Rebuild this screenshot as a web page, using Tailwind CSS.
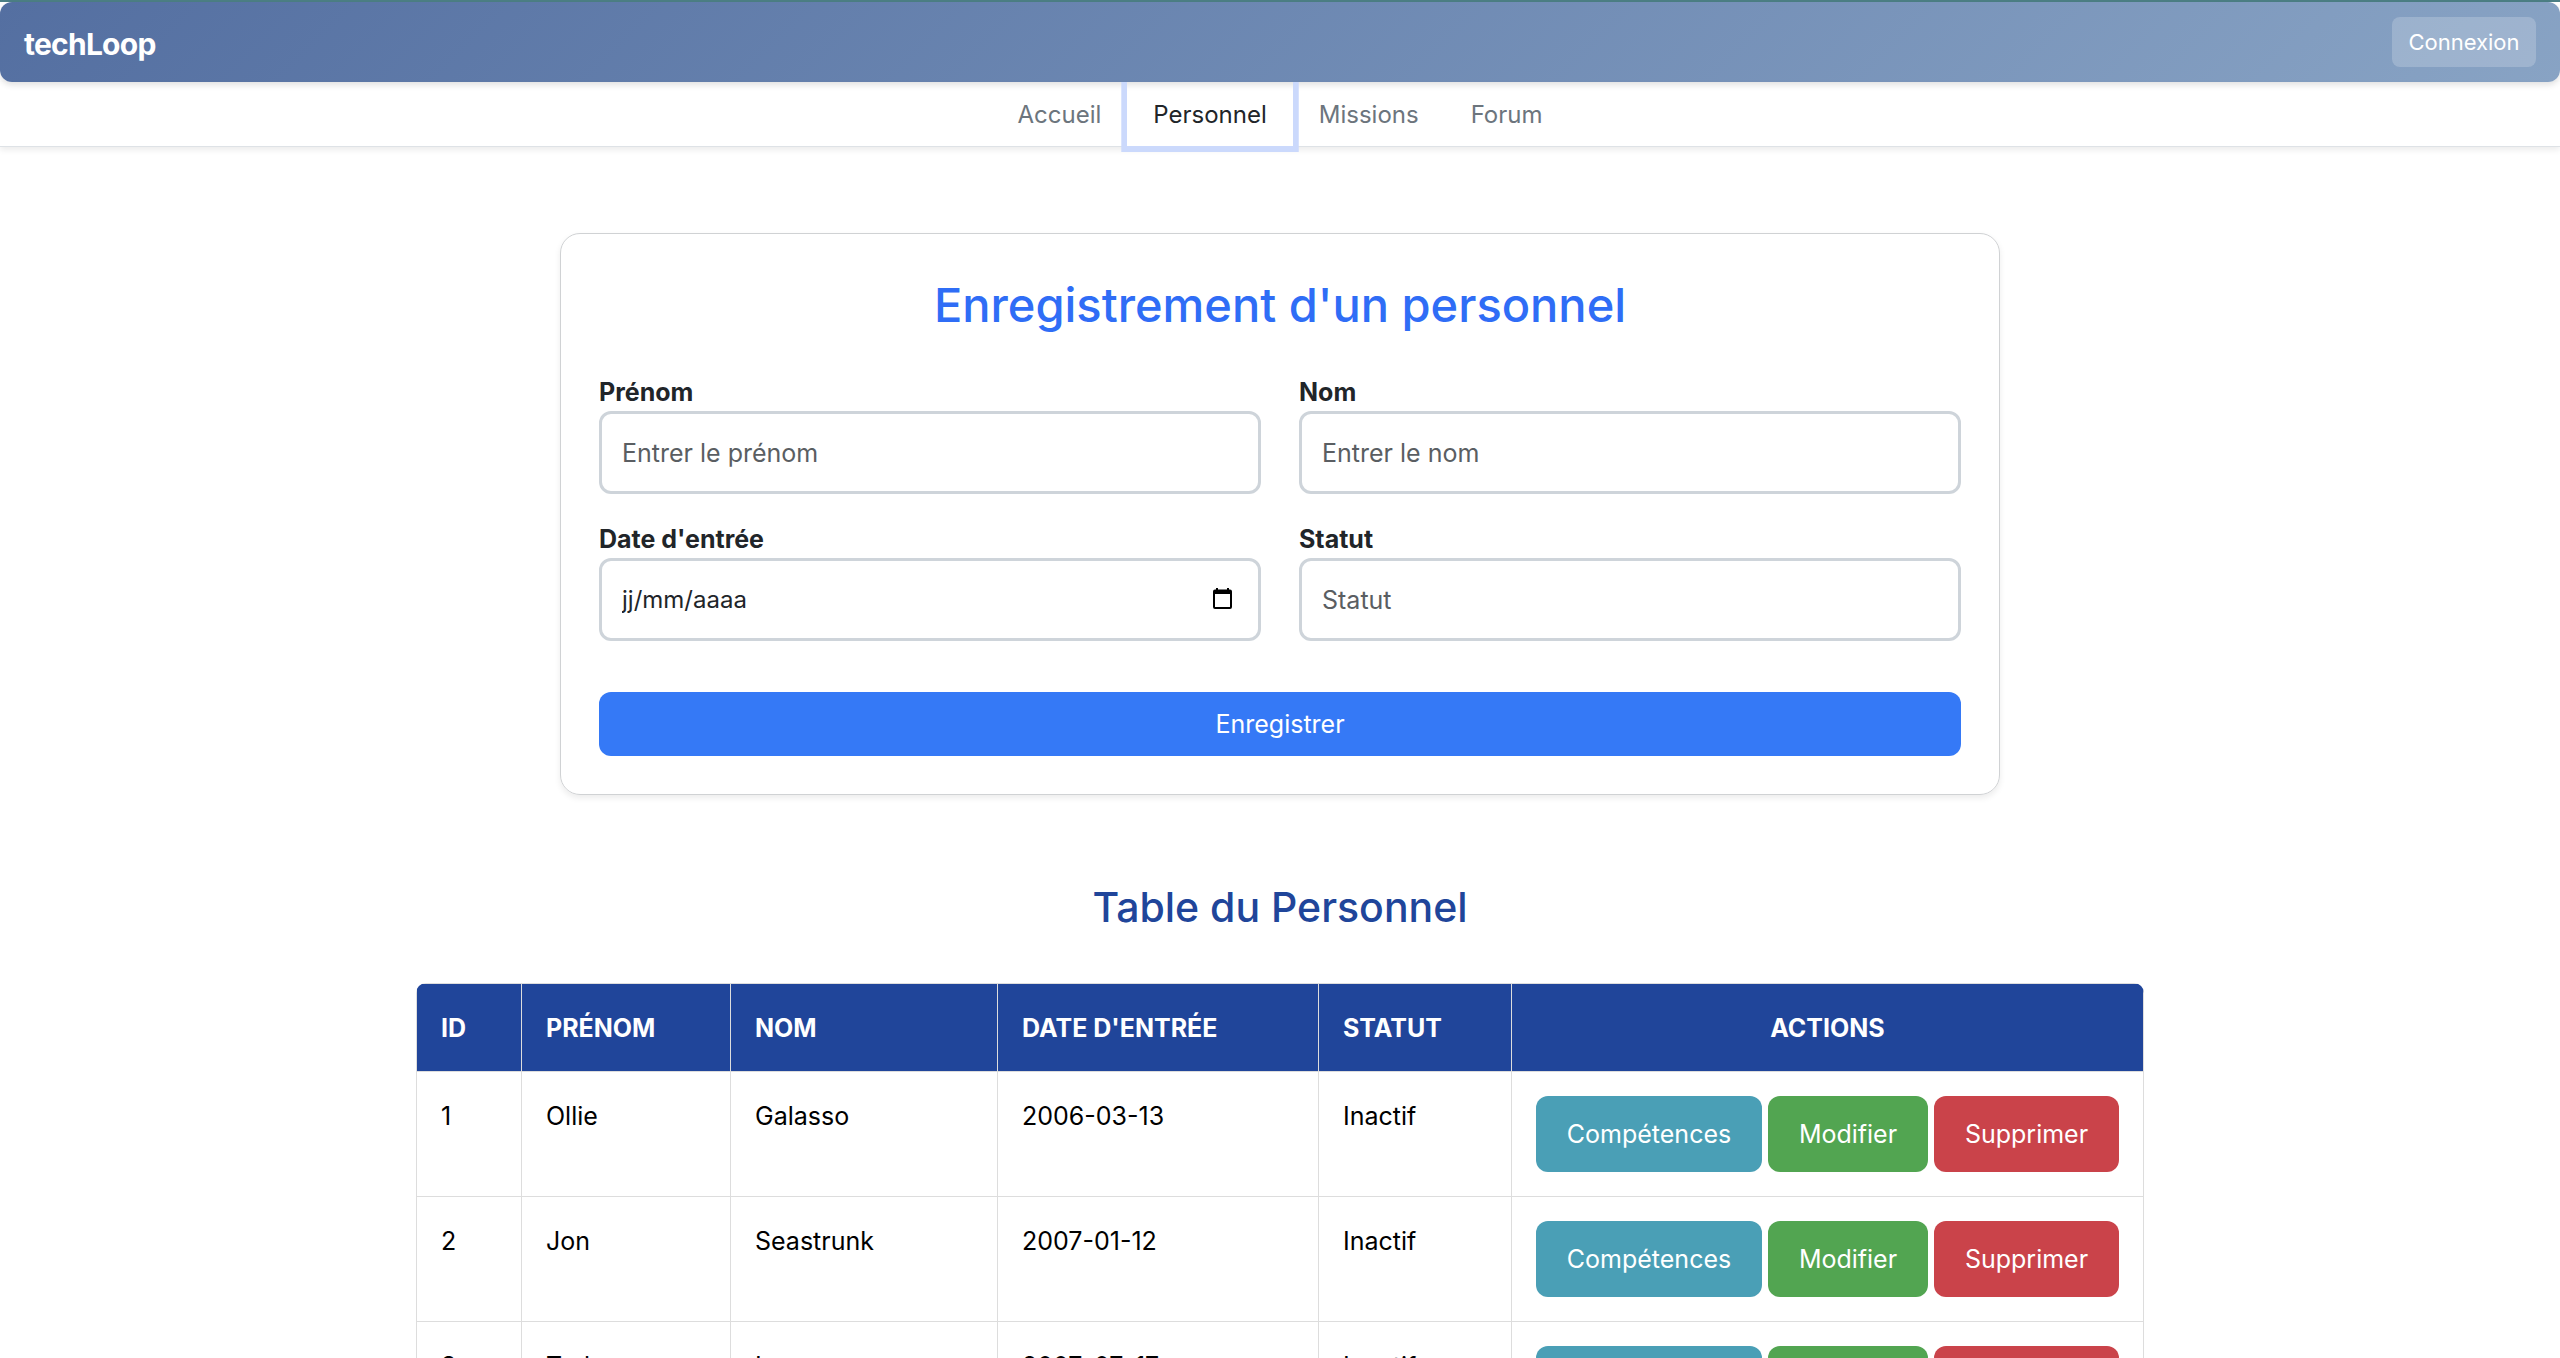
<!DOCTYPE html>
<html lang="fr">
<head>
<meta charset="utf-8">
<title>techLoop</title>
<script src="https://cdn.jsdelivr.net/npm/@tailwindcss/browser@4"></script>
</head>
<body class="bg-white font-['Inter','Liberation_Sans',sans-serif] text-[25px] leading-[38px] text-[#212529] overflow-x-hidden">
<header class="border-t-2 border-[#4c7f85]">
  <div class="flex items-center justify-between h-20 px-6 rounded-xl bg-linear-135 from-[#546fa1] to-[#88a3c4] shadow-[0_3px_6px_rgba(0,0,0,0.12)]">
    <a href="#" class="pt-1 text-[30px] font-bold text-white tracking-tight">techLoop</a>
    <button type="button" class="h-[50px] w-36 rounded-lg bg-white/20 text-[22px] leading-none text-white">Connexion</button>
  </div>
</header>
<nav class="flex justify-center h-[65px] border-b border-[#dee2e6] text-[24px] text-[#6c757d] shadow-[0_3px_6px_rgba(0,0,0,0.08)]">
  <a href="#" class="flex items-center px-[26px] pt-[2px]">Accueil</a>
  <a href="#" class="flex items-center px-[26px] pt-[2px] text-[#212529] shadow-[0_0_0_6px_#cbd9fc] [clip-path:inset(0_-6px_-6px_-6px)]">Personnel</a>
  <a href="#" class="flex items-center px-[26px] pt-[2px]">Missions</a>
  <a href="#" class="flex items-center px-[26px] pt-[2px]">Forum</a>
</nav>
<main class="px-10">
  <form class="mx-auto mt-[86px] max-w-[1440px] rounded-[20px] border border-[#d0d2d4] px-[38px] pt-10 pb-[38px] shadow-[0_3px_6px_rgba(0,0,0,0.08)]">
    <h1 class="text-center text-[47px] leading-[62px] font-medium text-[#2f6df6]">Enregistrement d'un personnel</h1>
    <div class="mt-[37px] grid grid-cols-2 gap-x-[38px] gap-y-[26px]">
      <div>
        <label for="prenom" class="block font-bold">Prénom</label>
        <input id="prenom" type="text" placeholder="Entrer le prénom" class="block h-[83px] w-full rounded-xl border-3 border-[#ced4da] px-5 placeholder:text-[#5a5e62]">
      </div>
      <div>
        <label for="nom" class="block font-bold">Nom</label>
        <input id="nom" type="text" placeholder="Entrer le nom" class="block h-[83px] w-full rounded-xl border-3 border-[#ced4da] px-5 placeholder:text-[#5a5e62]">
      </div>
      <div>
        <label for="date" class="block font-bold">Date d'entrée</label>
        <div class="flex h-[83px] items-center rounded-xl border-3 border-[#ced4da] pr-6 pl-5">
          <input id="date" type="text" placeholder="jj/mm/aaaa" class="min-w-0 flex-1 text-[24px] placeholder:text-[#212529]">
          <button type="button" aria-label="Ouvrir le calendrier">
            <svg class="block size-[23px]" viewBox="0 0 23 23"><path fill="#000" fill-rule="evenodd" d="M5 0h2v1.500h9V0h2v1.500h1a2 2 0 0 1 2 2v15.500a2 2 0 0 1-2 2H4a2 2 0 0 1-2-2V3.500a2 2 0 0 1 2-2h1zM4 6v13h15V6z"/></svg>
          </button>
        </div>
      </div>
      <div>
        <label for="statut" class="block font-bold">Statut</label>
        <input id="statut" type="text" placeholder="Statut" class="block h-[83px] w-full rounded-xl border-3 border-[#ced4da] px-5 placeholder:text-[#5a5e62]">
      </div>
    </div>
    <button type="submit" class="mt-[51px] block h-16 w-full rounded-xl bg-[#3579f6] text-white">Enregistrer</button>
  </form>
  <section class="mx-auto mt-[84px] max-w-[1728px]">
    <h2 class="text-center text-[41px] leading-[56px] font-medium text-[#20459a]">Table du Personnel</h2>
    <div class="mt-12 overflow-hidden rounded-t-[10px]">
    <table class="w-full table-fixed border-collapse text-black">
      <colgroup><col class="w-[105px]"><col class="w-[209px]"><col class="w-[267px]"><col class="w-[321px]"><col class="w-[193px]"><col></colgroup>
      <thead>
        <tr class="h-[88px] bg-[#20459a] text-left font-bold uppercase text-white">
          <th class="border border-[#dddddd] px-6">ID</th><th class="border border-[#dddddd] px-6">Prénom</th><th class="border border-[#dddddd] px-6">Nom</th><th class="border border-[#dddddd] px-6">Date d'entrée</th><th class="border border-[#dddddd] px-6">Statut</th><th class="border border-[#dddddd] px-6 text-center">Actions</th>
        </tr>
      </thead>
      <tbody id="rows"></tbody>
    </table>
    </div>
  </section>
</main>
<script>
const people = [
  [1, "Ollie", "Galasso", "2006-03-13", "Inactif"],
  [2, "Jon", "Seastrunk", "2007-01-12", "Inactif"],
  [3, "Ted", "Larson", "2007-07-17", "Inactif"],
];
const cell = 'class="border border-[#dddddd] px-6 py-6 align-top leading-[40px]"';
const btn = 'h-[76px] rounded-xl text-white';
document.getElementById("rows").innerHTML = people.map(p => `<tr>${p.map(v => `<td ${cell}>${v}</td>`).join("")}<td ${cell}><div class="flex justify-center gap-[6px]"><button type="button" class="${btn} w-[226px] bg-[#4a9fb6]">Compétences</button><button type="button" class="${btn} w-40 bg-[#52a551]">Modifier</button><button type="button" class="${btn} w-[185px] bg-[#ca434a]">Supprimer</button></div></td></tr>`).join("");
</script>
</body>
</html>
